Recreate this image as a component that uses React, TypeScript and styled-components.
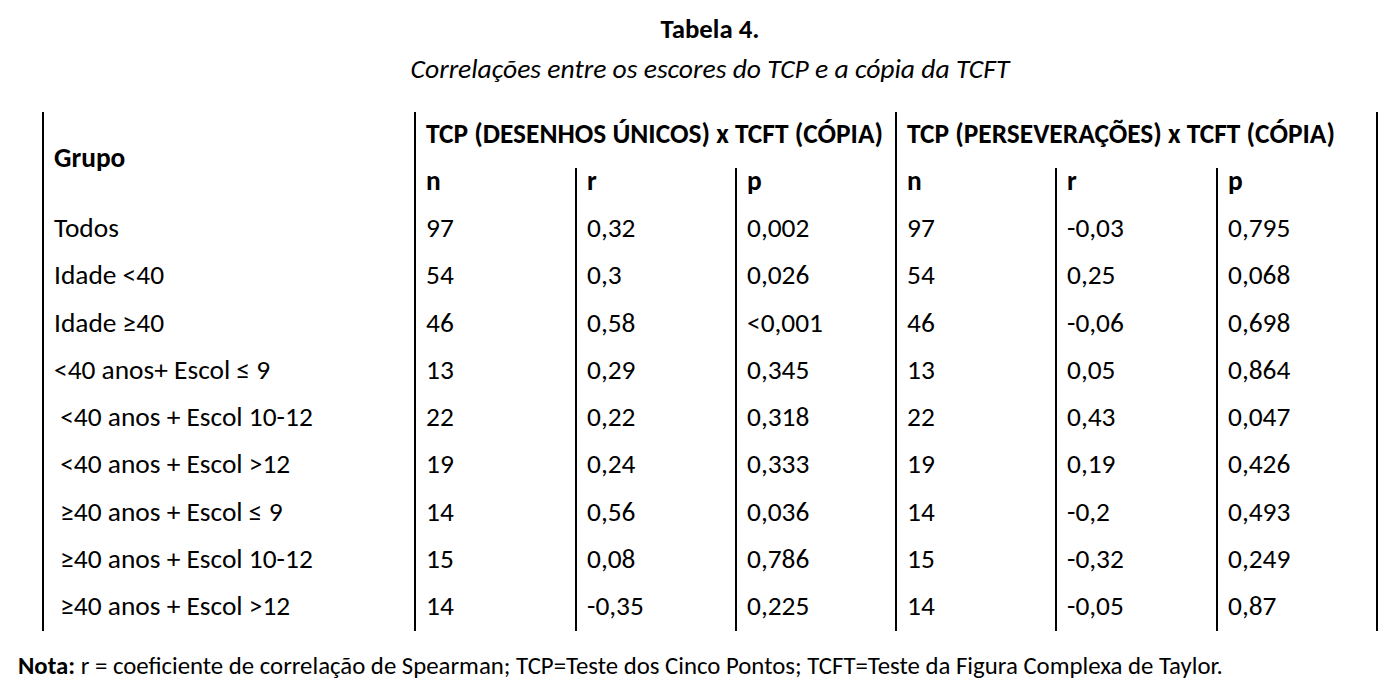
import React from "react";
import styled, { createGlobalStyle } from "styled-components";

const GlobalStyle = createGlobalStyle`
  html, body { margin: 0; padding: 0; background: #ffffff; }
  body {
    font-family: "Carlito", "Calibri", "Lato", sans-serif;
    color: #000000;
  }
`;

const Page = styled.div`
  width: 1396px;
  height: 698px;
  box-sizing: border-box;
  padding: 9px 0 0 18px;
  display: flex;
  flex-direction: column;
  overflow: hidden;
`;

const Caption = styled.div`
  margin-left: 24px;
  width: 1336px;
  display: flex;
  flex-direction: column;
  align-items: center;
`;

const Title = styled.div`
  font-weight: 700;
  font-size: 26.8px;
  line-height: 40px;
`;

const Subtitle = styled.div`
  font-style: italic;
  font-size: 27.6px;
  line-height: 40px;
`;

const Table = styled.div`
  margin: 23px 0 0 24px;
  width: 1336px;
  box-sizing: border-box;
  border-right: 2px solid #000;
  display: grid;
  grid-template-columns: 372px 161px 160px 160px 160px 161px 160px;
  grid-template-rows: 56px 38px repeat(9, 47.25px);
  font-size: 27.4px;
`;

const Cell = styled.div<{ $bold?: boolean; $span?: number; $rows?: number; $shift?: number }>`
  box-sizing: border-box;
  border-left: 2px solid #000;
  padding-left: 10px;
  display: flex;
  align-items: center;
  white-space: pre;
  font-weight: ${(p) => (p.$bold ? 700 : 400)};
  grid-column: span ${(p) => p.$span ?? 1};
  grid-row: span ${(p) => p.$rows ?? 1};
  padding-bottom: ${(p) => p.$shift ?? 0}px;
`;

const Note = styled.div`
  margin-top: 20px;
  font-size: 24.8px;
  line-height: 30px;
  white-space: pre;
`;

const Strong = styled.span`
  font-weight: 700;
`;

const rows: string[][] = [
  ["Todos", "97", "0,32", "0,002", "97", "-0,03", "0,795"],
  ["Idade <40", "54", "0,3", "0,026", "54", "0,25", "0,068"],
  ["Idade ≥40", "46", "0,58", "<0,001", "46", "-0,06", "0,698"],
  ["<40 anos+ Escol ≤ 9", "13", "0,29", "0,345", "13", "0,05", "0,864"],
  [" <40 anos + Escol 10-12", "22", "0,22", "0,318", "22", "0,43", "0,047"],
  [" <40 anos + Escol >12", "19", "0,24", "0,333", "19", "0,19", "0,426"],
  [" ≥40 anos + Escol ≤ 9", "14", "0,56", "0,036", "14", "-0,2", "0,493"],
  [" ≥40 anos + Escol 10-12", "15", "0,08", "0,786", "15", "-0,32", "0,249"],
  [" ≥40 anos + Escol >12", "14", "-0,35", "0,225", "14", "-0,05", "0,87"],
];

export default function App() {
  return (
    <>
      <GlobalStyle />
      <Page>
        <Caption>
          <Title>Tabela 4.</Title>
          <Subtitle>Correlações entre os escores do TCP e a cópia da TCFT</Subtitle>
        </Caption>
        <Table>
          <Cell $bold $rows={2} $shift={4}>Grupo</Cell>
          <Cell $bold $span={3} $shift={14}>TCP (DESENHOS ÚNICOS) x TCFT (CÓPIA)</Cell>
          <Cell $bold $span={3} $shift={14}>TCP (PERSEVERAÇÕES) x TCFT (CÓPIA)</Cell>
          {["n", "r", "p", "n", "r", "p"].map((h, i) => (
            <Cell key={`h${i}`} $bold $shift={14}>{h}</Cell>
          ))}
          {rows.map((r, ri) =>
            r.map((v, ci) => (
              <Cell key={`${ri}-${ci}`} $shift={4}>{v}</Cell>
            ))
          )}
        </Table>
        <Note>
          <Strong>Nota:</Strong> r = coeficiente de correlação de Spearman; TCP=Teste dos Cinco Pontos; TCFT=Teste da Figura Complexa de Taylor.
        </Note>
      </Page>
    </>
  );
}
